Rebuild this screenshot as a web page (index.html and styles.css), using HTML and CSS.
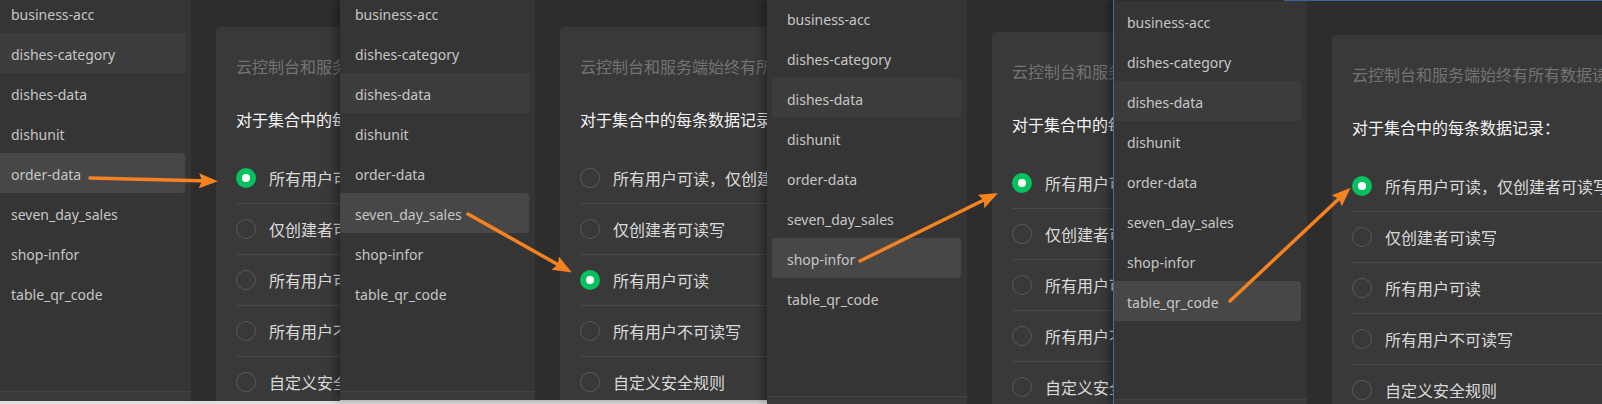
FILE: index.html
```html
<!DOCTYPE html>
<html lang="zh-CN">
<head>
<meta charset="utf-8">
<title>数据库权限设置</title>
<link rel="stylesheet" href="styles.css">
</head>
<body>
<div class="stage">

  <section class="win win1">
    <div class="app">
      <aside class="sidebar">
        <ul class="list">
          <li class="item">business-acc</li>
          <li class="item hover">dishes-category</li>
          <li class="item">dishes-data</li>
          <li class="item">dishunit</li>
          <li class="item active">order-data</li>
          <li class="item">seven_day_sales</li>
          <li class="item">shop-infor</li>
          <li class="item">table_qr_code</li>
        </ul>
        <div class="sidebar-foot"></div>
      </aside>
      <main class="main">
        <div class="card">
          <p class="desc">云控制台和服务端始终有所有数据读写权限，以下权限配置仅对小程序端发起的请求有效。</p>
          <p class="title">对于集合中的每条数据记录：</p>
          <ul class="options">
            <li class="option"><span class="radio checked"></span><span>所有用户可读，仅创建者可读写</span></li>
            <li class="option"><span class="radio"></span><span>仅创建者可读写</span></li>
            <li class="option"><span class="radio"></span><span>所有用户可读</span></li>
            <li class="option"><span class="radio"></span><span>所有用户不可读写</span></li>
            <li class="option"><span class="radio"></span><span>自定义安全规则</span></li>
          </ul>
        </div>
      </main>
    </div>
  </section>

  <section class="win win2">
    <div class="app">
      <aside class="sidebar">
        <ul class="list">
          <li class="item">business-acc</li>
          <li class="item">dishes-category</li>
          <li class="item hover">dishes-data</li>
          <li class="item">dishunit</li>
          <li class="item">order-data</li>
          <li class="item active">seven_day_sales</li>
          <li class="item">shop-infor</li>
          <li class="item">table_qr_code</li>
        </ul>
        <div class="sidebar-foot"></div>
      </aside>
      <main class="main">
        <div class="card">
          <p class="desc">云控制台和服务端始终有所有数据读写权限，以下权限配置仅对小程序端发起的请求有效。</p>
          <p class="title">对于集合中的每条数据记录：</p>
          <ul class="options">
            <li class="option"><span class="radio"></span><span>所有用户可读，仅创建者可读写</span></li>
            <li class="option"><span class="radio"></span><span>仅创建者可读写</span></li>
            <li class="option"><span class="radio checked"></span><span>所有用户可读</span></li>
            <li class="option"><span class="radio"></span><span>所有用户不可读写</span></li>
            <li class="option"><span class="radio"></span><span>自定义安全规则</span></li>
          </ul>
        </div>
      </main>
    </div>
  </section>

  <section class="win win3">
    <div class="app">
      <aside class="sidebar">
        <ul class="list">
          <li class="item">business-acc</li>
          <li class="item">dishes-category</li>
          <li class="item hover">dishes-data</li>
          <li class="item">dishunit</li>
          <li class="item">order-data</li>
          <li class="item">seven_day_sales</li>
          <li class="item active">shop-infor</li>
          <li class="item">table_qr_code</li>
        </ul>
        <div class="sidebar-foot"></div>
      </aside>
      <main class="main">
        <div class="card">
          <p class="desc">云控制台和服务端始终有所有数据读写权限，以下权限配置仅对小程序端发起的请求有效。</p>
          <p class="title">对于集合中的每条数据记录：</p>
          <ul class="options">
            <li class="option"><span class="radio checked"></span><span>所有用户可读，仅创建者可读写</span></li>
            <li class="option"><span class="radio"></span><span>仅创建者可读写</span></li>
            <li class="option"><span class="radio"></span><span>所有用户可读</span></li>
            <li class="option"><span class="radio"></span><span>所有用户不可读写</span></li>
            <li class="option"><span class="radio"></span><span>自定义安全规则</span></li>
          </ul>
        </div>
      </main>
    </div>
  </section>

  <section class="win win4">
    <div class="app">
      <aside class="sidebar">
        <ul class="list">
          <li class="item">business-acc</li>
          <li class="item">dishes-category</li>
          <li class="item hover">dishes-data</li>
          <li class="item">dishunit</li>
          <li class="item">order-data</li>
          <li class="item">seven_day_sales</li>
          <li class="item">shop-infor</li>
          <li class="item active">table_qr_code</li>
        </ul>
        <div class="sidebar-foot"></div>
      </aside>
      <main class="main">
        <div class="card">
          <p class="desc">云控制台和服务端始终有所有数据读写权限，以下权限配置仅对小程序端发起的请求有效。</p>
          <p class="title">对于集合中的每条数据记录：</p>
          <ul class="options">
            <li class="option"><span class="radio checked"></span><span>所有用户可读，仅创建者可读写</span></li>
            <li class="option"><span class="radio"></span><span>仅创建者可读写</span></li>
            <li class="option"><span class="radio"></span><span>所有用户可读</span></li>
            <li class="option"><span class="radio"></span><span>所有用户不可读写</span></li>
            <li class="option"><span class="radio"></span><span>自定义安全规则</span></li>
          </ul>
        </div>
      </main>
    </div>
  </section>

  <svg class="arrows" width="1602" height="404" viewBox="0 0 1602 404" aria-hidden="true">
    <defs>
      <marker id="head" markerUnits="userSpaceOnUse" markerWidth="20" markerHeight="16" refX="10" refY="7.5" orient="auto">
        <path d="M0,0 L19,7.5 L0,15 L3,7.5 Z" fill="#f58220"/>
      </marker>
    </defs>
    <line x1="90" y1="178" x2="209" y2="181" class="arrow-line" marker-end="url(#head)"/>
    <line x1="468" y1="214" x2="564" y2="268" class="arrow-line" marker-end="url(#head)"/>
    <line x1="860" y1="261" x2="990" y2="197" class="arrow-line" marker-end="url(#head)"/>
    <line x1="1230" y1="301" x2="1344" y2="194" class="arrow-line" marker-end="url(#head)"/>
  </svg>
</div>
</body>
</html>
```

FILE: styles.css
```css
* {
  box-sizing: border-box;
}

html, body {
  margin: 0;
  padding: 0;
}

body {
  background: #dedede;
  font-family: "Noto Sans", "Noto Sans CJK SC", sans-serif;
  width: 1602px;
  height: 404px;
  overflow: hidden;
}

ul, p {
  margin: 0;
  padding: 0;
  list-style: none;
}

.stage {
  position: relative;
  display: flex;
  align-items: flex-start;
  width: 1602px;
  height: 404px;
  overflow: hidden;
}

.win {
  position: relative;
  flex: none;
  overflow: hidden;
  background: #2d2d2d;
}

.win1 {
  width: 340px;
  height: 401px;
  z-index: 1;
}

.win2 {
  width: 427px;
  height: 400px;
  z-index: 2;
  box-shadow: -4px 0 8px rgba(0, 0, 0, 0.35);
}

.win3 {
  width: 346px;
  height: 404px;
  z-index: 3;
  box-shadow: -4px 0 8px rgba(0, 0, 0, 0.35);
}

.win4 {
  flex: 1;
  height: 404px;
  z-index: 4;
  border-left: 1px solid #3f6fa6;
  box-shadow: -4px 0 8px rgba(0, 0, 0, 0.35);
}

.win4::before {
  content: "";
  position: absolute;
  top: 0;
  left: 170px;
  right: 0;
  height: 1px;
  background: #3a6396;
  z-index: 1;
}

.app {
  display: flex;
  align-items: stretch;
  width: 1000px;
  height: 460px;
}

.win1 .app { margin: -7px 0 0 -9px; }
.win2 .app { margin: -7px 0 0 -5px; }
.win3 .app { margin: -2px 0 0 0; }
.win4 .app { margin: 1px 0 0 -7px; }

/* Sidebar */
.sidebar {
  flex: none;
  width: 200px;
  background: #353535;
  display: flex;
  flex-direction: column;
}

.list {
  display: flex;
  flex-direction: column;
}

.item {
  height: 40px;
  line-height: 38px;
  padding-top: 3px;
  margin: 0 6px 0 5px;
  padding-left: 15px;
  border-radius: 3px;
  font-size: 14px;
  color: #c6c6c6;
  white-space: nowrap;
}

.item.hover {
  background: #3c3c3c;
}

.item.active {
  background: #474747;
}

.sidebar-foot {
  margin-top: 78px;
  height: 40px;
  border-top: 1px solid #434343;
  background: #393939;
}

/* Main */
.main {
  flex: 1;
  padding-left: 25px;
  background: #2d2d2d;
}

.card {
  margin-top: 34px;
  width: 720px;
  height: 440px;
  background: #393939;
  border-radius: 4px;
  padding: 28px 0 0 20px;
  white-space: nowrap;
}

.desc {
  font-size: 16px;
  line-height: 24px;
  color: #737373;
}

.title {
  margin-top: 29px;
  font-size: 16px;
  line-height: 24px;
  color: #f4f4f4;
}

.options {
  margin-top: 21px;
}

.option {
  display: flex;
  align-items: center;
  gap: 13px;
  height: 51px;
  border-bottom: 1px solid #4a4a4a;
  font-size: 16px;
  color: #d9d9d9;
}

.radio {
  flex: none;
  width: 20px;
  height: 20px;
  border-radius: 50%;
  border: 1px solid #5a5a5a;
  display: flex;
  align-items: center;
  justify-content: center;
}

.radio.checked {
  border: none;
  background: #07c160;
}

.radio.checked::after {
  content: "";
  width: 8px;
  height: 8px;
  border-radius: 50%;
  background: #ffffff;
}

/* Annotation arrows */
.arrows {
  position: absolute;
  left: 0;
  top: 0;
  z-index: 10;
  pointer-events: none;
}

.arrow-line {
  stroke: #f58220;
  stroke-width: 3.5;
  stroke-linecap: round;
}
```
